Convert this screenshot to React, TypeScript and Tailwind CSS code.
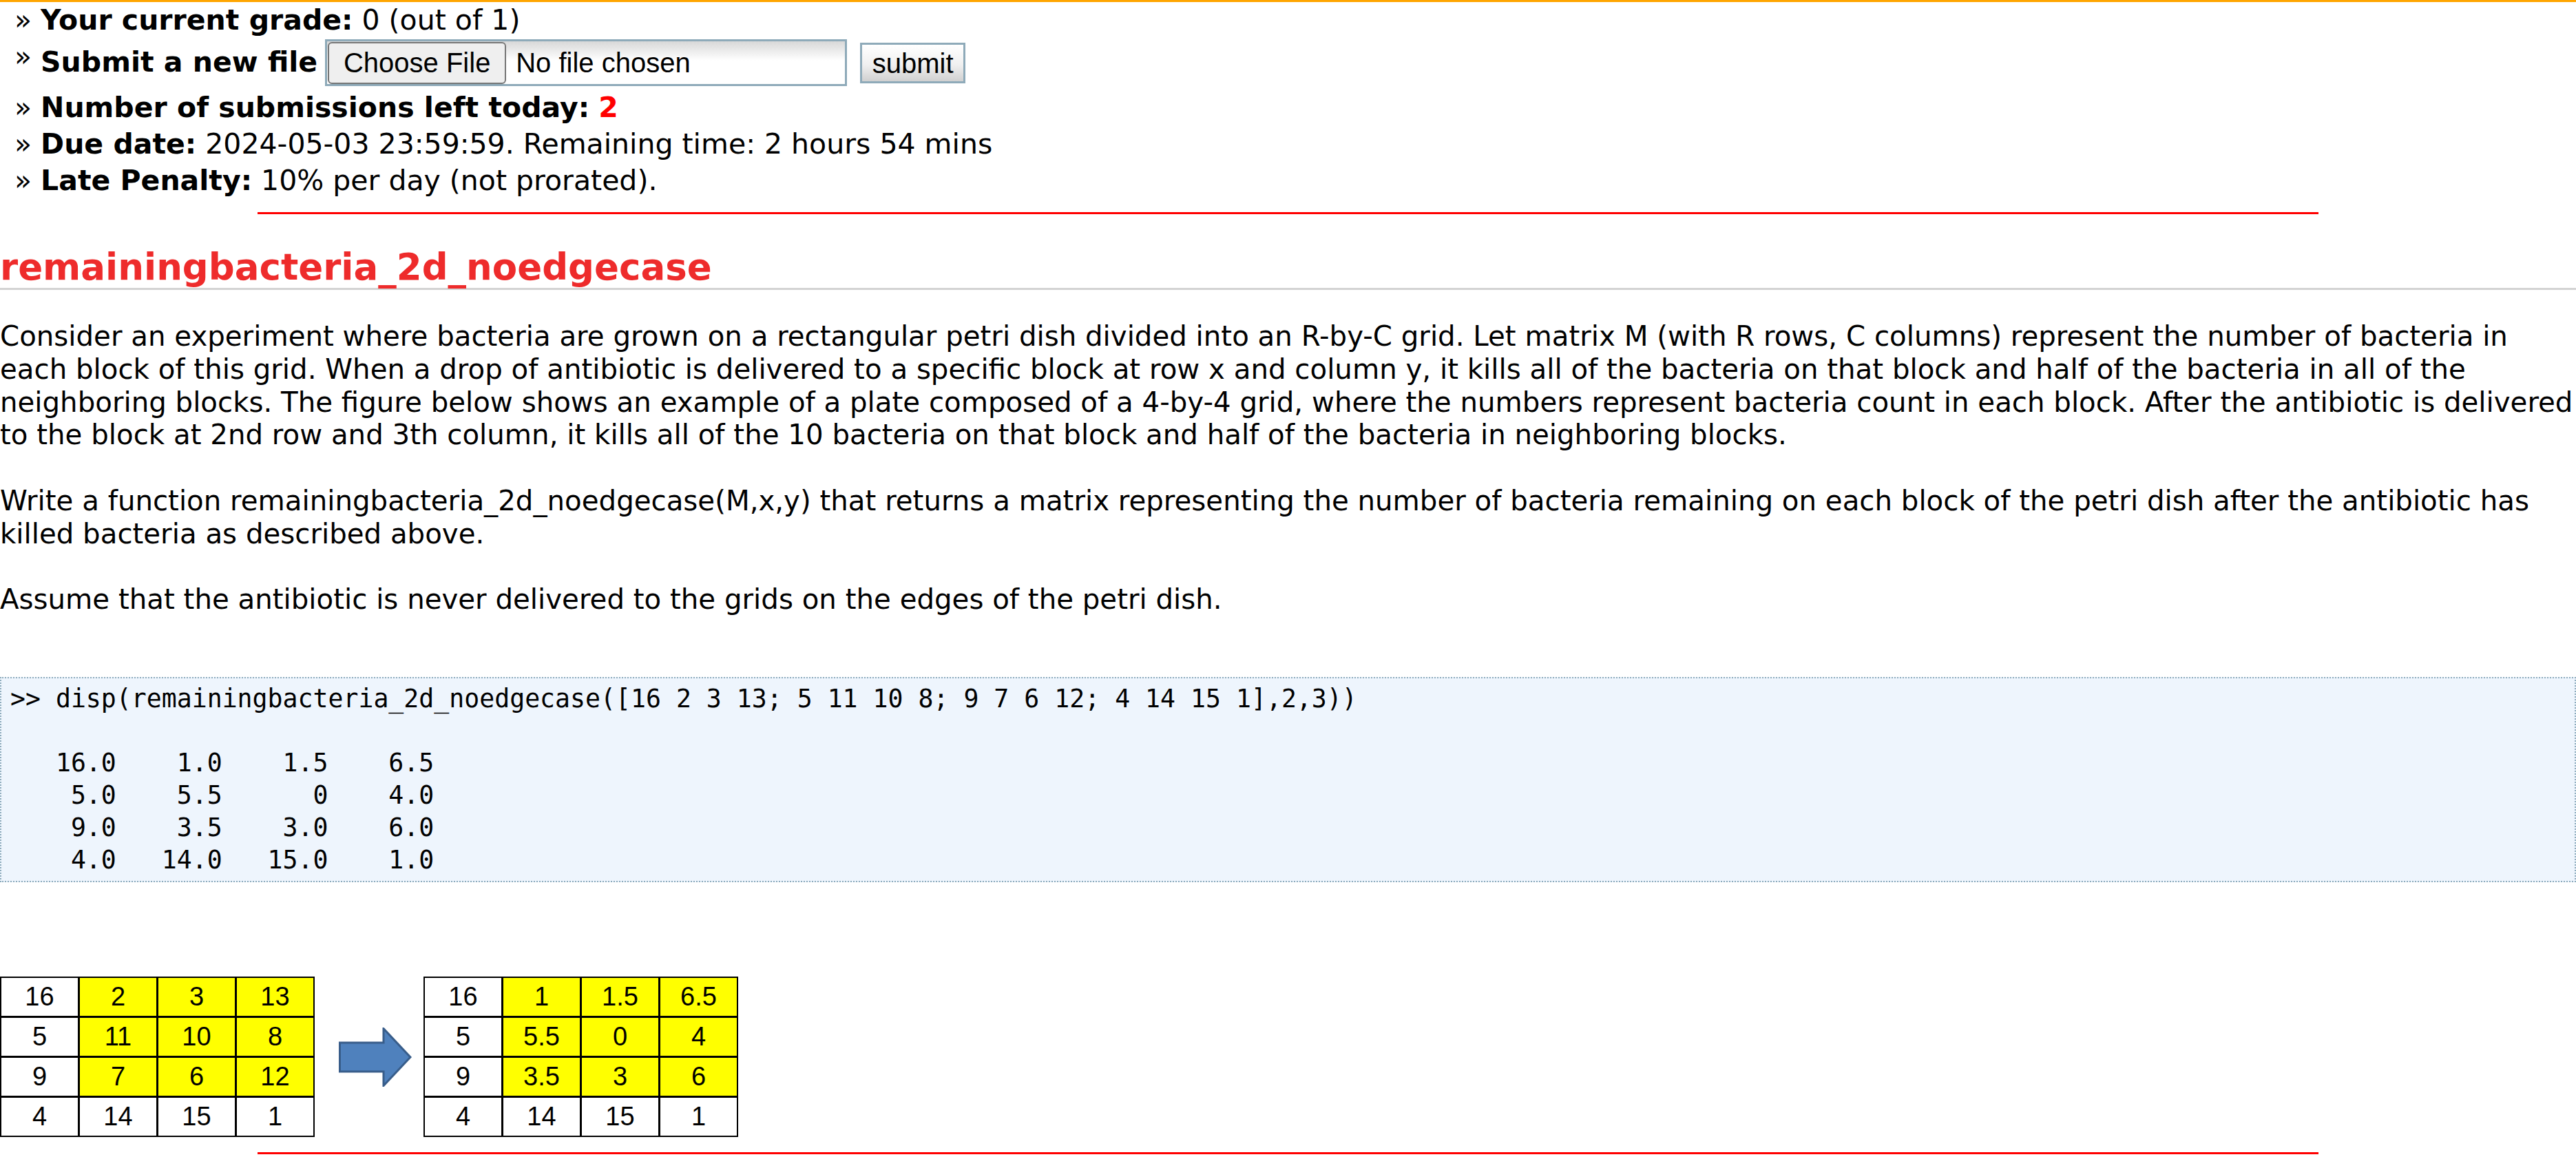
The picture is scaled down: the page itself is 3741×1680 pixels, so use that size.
import React from 'react';

const before = [
  ['16', '2', '3', '13'],
  ['5', '11', '10', '8'],
  ['9', '7', '6', '12'],
  ['4', '14', '15', '1'],
];

const after = [
  ['16', '1', '1.5', '6.5'],
  ['5', '5.5', '0', '4'],
  ['9', '3.5', '3', '6'],
  ['4', '14', '15', '1'],
];

const output = `>> disp(remainingbacteria_2d_noedgecase([16 2 3 13; 5 11 10 8; 9 7 6 12; 4 14 15 1],2,3))

   16.0    1.0    1.5    6.5
    5.0    5.5      0    4.0
    9.0    3.5    3.0    6.0
    4.0   14.0   15.0    1.0`;

// lines as they wrap on the original page
const intro = [
  'Consider an experiment where bacteria are grown on a rectangular petri dish divided into an R-by-C grid. Let matrix M (with R rows, C columns) represent the number of bacteria in',
  'each block of this grid. When a drop of antibiotic is delivered to a specific block at row x and column y, it kills all of the bacteria on that block and half of the bacteria in all of the',
  'neighboring blocks. The figure below shows an example of a plate composed of a 4-by-4 grid, where the numbers represent bacteria count in each block. After the antibiotic is delivered',
  'to the block at 2nd row and 3th column, it kills all of the 10 bacteria on that block and half of the bacteria in neighboring blocks.',
];

const task = [
  'Write a function remainingbacteria_2d_noedgecase(M,x,y) that returns a matrix representing the number of bacteria remaining on each block of the petri dish after the antibiotic has',
  'killed bacteria as described above.',
];

const Grid: React.FC<{ cells: string[][] }> = ({ cells }) => (
  <div className="grid grid-cols-[repeat(4,111px)] grid-rows-[repeat(4,55px)] gap-[3px] bg-black p-[2px] font-['Liberation_Sans',sans-serif] text-[38px] text-black">
    {cells.flatMap((row, r) =>
      row.map((v, c) => (
        <div
          key={`${r}-${c}`}
          className={
            'flex items-center justify-center ' +
            (r < 3 && c > 0 ? 'bg-[#ffff00]' : 'bg-white')
          }
        >
          {v}
        </div>
      ))
    )}
  </div>
);

const Arrow = () => (
  <svg width="106" height="86" viewBox="0 0 106 86" className="shrink-0">
    <path
      d="M1.5 22 H65 V1.5 L104 43 L65 84.5 V64 H1.5 Z"
      fill="#4f81bd"
      stroke="#385d8a"
      strokeWidth="3"
      strokeLinejoin="miter"
    />
  </svg>
);

const Row: React.FC<{ children: React.ReactNode; className?: string }> = ({ children, className }) => (
  <div className={'flex whitespace-nowrap pl-[21px] ' + (className || '')}>
    <span className="mr-[13px]">»</span>
    {children}
  </div>
);

const Lines: React.FC<{ lines: string[] }> = ({ lines }) => (
  <>
    {lines.map((l, i) => (
      <React.Fragment key={i}>
        {l}
        <br />
      </React.Fragment>
    ))}
  </>
);

export default function App() {
  return (
    <div className="min-h-screen bg-white border-t-[3px] border-[#ffa500] font-['DejaVu_Sans',sans-serif] text-[41px] text-black">
      {/* submission info */}
      <div className="leading-[53px]">
        <Row>
          <span>
            <b>Your current grade:</b> 0 (out of 1)
          </span>
        </Row>
        <Row className="h-[76px] items-start">
          <span className="mt-[8px] font-bold">Submit a new file</span>
          <div className="ml-[11px] mt-[1px] flex h-[68px] w-[758px] items-center border-[3px] border-[#8eaab9] bg-[linear-gradient(to_bottom,#d8d8d8_0%,#ffffff_45%,#ffffff_100%)] pl-[1px] font-['Liberation_Sans',sans-serif] text-[40px]">
            <div className="flex h-[61px] w-[259px] items-center justify-center rounded-[6px] border-2 border-[#767676] bg-[#efefef] leading-none">
              Choose File
            </div>
            <span className="ml-[14px] leading-none">No file chosen</span>
          </div>
          <button className="ml-[19px] mt-[6px] flex h-[59px] w-[153px] items-center justify-center border-[3px] border-[#8eaab9] bg-[linear-gradient(to_bottom,#ffffff_0%,#f0f0f0_55%,#d0d0d0_100%)] font-['Liberation_Sans',sans-serif] text-[40px] leading-none">
            submit
          </button>
        </Row>
        <Row className="-mt-[2px]">
          <span>
            <b>Number of submissions left today:</b> <b className="text-[#ff0000]">2</b>
          </span>
        </Row>
        <Row>
          <span>
            <b>Due date:</b> 2024-05-03 23:59:59. Remaining time: 2 hours 54 mins
          </span>
        </Row>
        <Row>
          <span>
            <b>Late Penalty:</b> 10% per day (not prorated).
          </span>
        </Row>
      </div>

      <hr className="mx-auto mt-[19px] w-4/5 border-0 border-t-[3px] border-[#ff0000]" />

      {/* problem */}
      <h2 className="mt-[47px] border-b-[3px] border-[#d3d3d3] text-[53px] font-bold leading-[60px] text-[#ee2b2b]">
        remainingbacteria_2d_noedgecase
      </h2>

      <div className="mt-[44px] whitespace-nowrap text-[40.3px] leading-[47.75px]">
        <Lines lines={intro} />
        <br />
        <Lines lines={task} />
        <br />
        Assume that the antibiotic is never delivered to the grids on the edges of the petri dish.
      </div>

      <pre className="mt-[88px] border-[2px] border-dotted border-[#8eacbd] bg-[#eef5fd] px-[13px] py-[7px] font-['DejaVu_Sans_Mono',monospace] text-[36.5px] leading-[46.75px]">
        {output}
      </pre>

      <div className="mt-[137px] flex items-center">
        <Grid cells={before} />
        <div className="ml-[35px] mr-[17px]">
          <Arrow />
        </div>
        <Grid cells={after} />
      </div>

      <hr className="mx-auto mt-[22px] w-4/5 border-0 border-t-[3px] border-[#ff0000]" />
    </div>
  );
}
